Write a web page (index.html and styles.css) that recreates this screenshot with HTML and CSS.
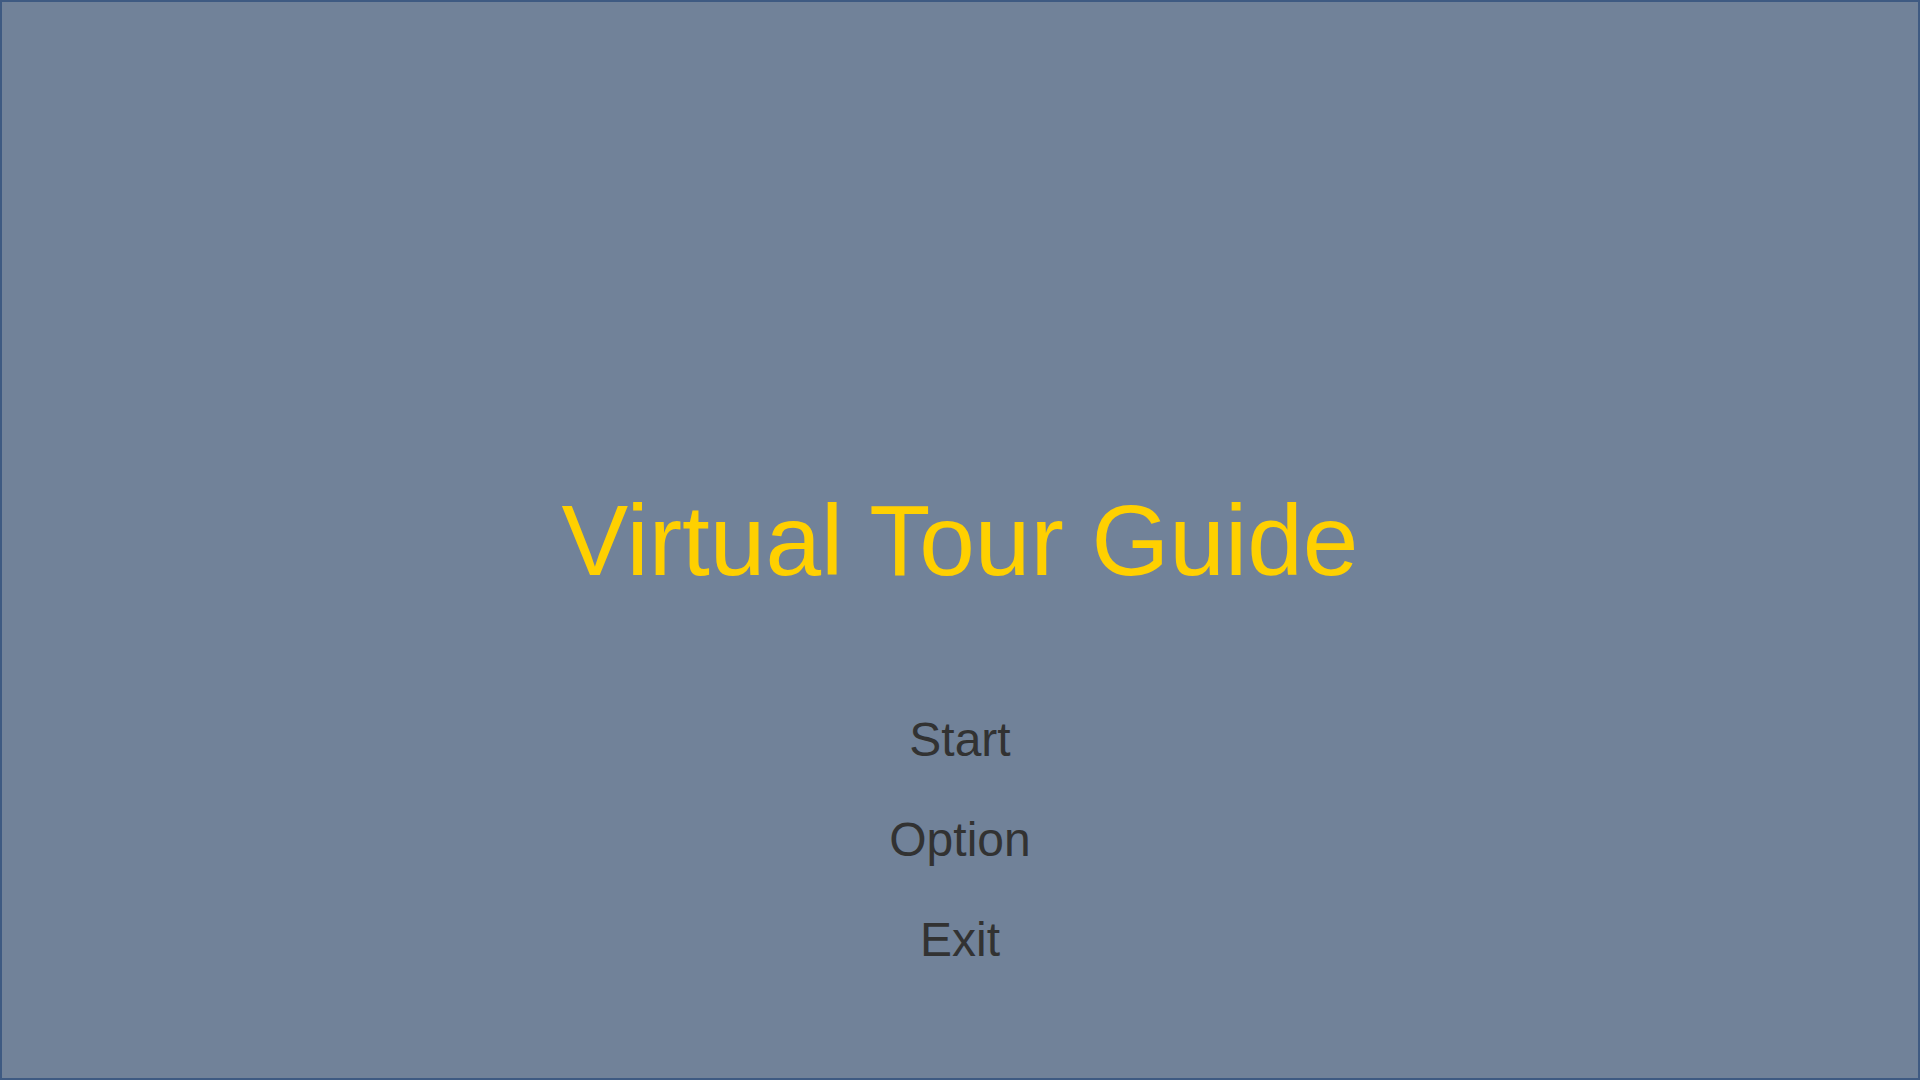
FILE: index.html
```html
<!DOCTYPE html>
<html lang="en">
<head>
<meta charset="utf-8">
<title>Virtual Tour Guide</title>
<link rel="stylesheet" href="styles.css">
</head>
<body>
<main class="screen">
  <h1 class="title">Virtual Tour Guide</h1>
  <nav class="menu">
    <button class="menu-item">Start</button>
    <button class="menu-item">Option</button>
    <button class="menu-item">Exit</button>
  </nav>
</main>
</body>
</html>
```
FILE: styles.css
```css
html, body {
  margin: 0;
  padding: 0;
  width: 1920px;
  height: 1080px;
  overflow: hidden;
}
.screen {
  box-sizing: border-box;
  width: 1920px;
  height: 1080px;
  background: #718299;
  border: 2px solid #3e5a82;
  display: flex;
  flex-direction: column;
  align-items: center;
  padding-top: 488px;
  gap: 100px;
  font-family: "Liberation Sans", Arial, sans-serif;
}
.title {
  margin: 0;
  font-size: 100px;
  line-height: 100px;
  font-weight: normal;
  color: #ffd000;
}
.menu {
  display: flex;
  flex-direction: column;
  align-items: center;
}
.menu-item {
  background: none;
  border: none;
  padding: 0;
  font-family: inherit;
  font-size: 48px;
  line-height: 100px;
  height: 100px;
  color: #323232;
  cursor: pointer;
}
```
